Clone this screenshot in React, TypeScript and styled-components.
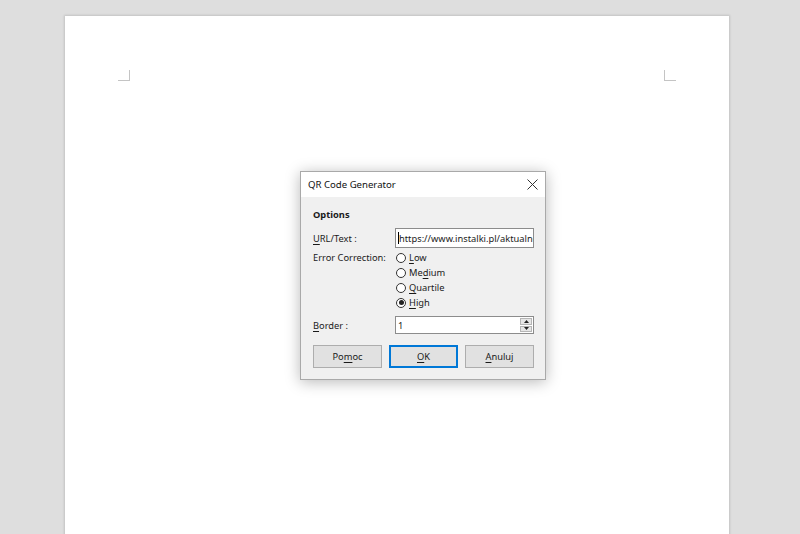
import { FC, ReactNode } from 'react';
import styled, { createGlobalStyle } from 'styled-components';

const GlobalStyle = createGlobalStyle`
  html, body {
    margin: 0;
    padding: 0;
    height: 100%;
    overflow: hidden;
    background: #dedede;
    font-family: "Noto Sans", "Open Sans", sans-serif;
  }
  #root {
    height: 100%;
  }
`;

const Workspace = styled.div`
  height: 534px;
  padding-top: 16px;
  box-sizing: border-box;
  overflow: hidden;
`;

const Sheet = styled.div`
  position: relative;
  margin-left: 65px;
  width: 664px;
  height: 560px;
  background: #ffffff;
  box-shadow: 0 0 2px 1px rgba(0, 0, 0, 0.12);
  padding: 54px 53px 0;
  box-sizing: border-box;
`;

const Marks = styled.div`
  display: flex;
  justify-content: space-between;
`;

const Mark = styled.div<{ $side: 'left' | 'right' }>`
  width: 11px;
  height: 10px;
  border-bottom: 1px solid #c4c4c4;
  ${(p) => (p.$side === 'left' ? 'border-right: 1px solid #c4c4c4;' : 'border-left: 1px solid #c4c4c4;')}
`;

const Dialog = styled.div`
  position: absolute;
  left: 235px;
  top: 155px;
  width: 244px;
  border: 1px solid #a9a9a9;
  box-shadow: 0 2px 14px rgba(0, 0, 0, 0.28);
  background: #f0f0f0;
  color: #1a1a1a;
  font-size: 9.3px;
`;

const TitleBar = styled.div`
  height: 25px;
  background: #ffffff;
  display: flex;
  align-items: center;
  justify-content: space-between;
  padding: 0 7px 1px 7px;
  box-sizing: border-box;
`;

const Title = styled.span`
  font-size: 9.6px;
  color: #111;
`;

const CloseButton = styled.button`
  border: none;
  background: none;
  padding: 0;
  width: 12px;
  height: 12px;
  display: flex;
  align-items: center;
  justify-content: center;
`;

const Body = styled.div`
  padding: 9px 11px 11px 12px;
  display: flex;
  flex-direction: column;
`;

const Heading = styled.div`
  font-weight: 700;
  line-height: 18px;
  height: 18px;
  margin-bottom: 4px;
`;

const FormRow = styled.div<{ $align?: string; $gap?: number }>`
  display: grid;
  grid-template-columns: 82px 1fr;
  align-items: ${(p) => p.$align ?? 'center'};
  margin-top: ${(p) => p.$gap ?? 0}px;
`;

const Label = styled.span<{ $top?: number }>`
  white-space: nowrap;
  padding-top: ${(p) => p.$top ?? 0}px;
`;

const TextInput = styled.div<{ $h: number }>`
  height: ${(p) => p.$h}px;
  border: 1px solid #8c8c8c;
  background: #fff;
  box-sizing: border-box;
  display: flex;
  align-items: center;
  padding-left: 2px;
  overflow: hidden;
  white-space: nowrap;
`;

const Caret = styled.span`
  display: inline-block;
  flex: none;
  width: 1px;
  height: 12px;
  background: #000;
`;

const RadioGroup = styled.div`
  display: flex;
  flex-direction: column;
  margin-top: 2px;
`;

const RadioRow = styled.div`
  display: flex;
  align-items: center;
  height: 15px;
  gap: 3px;
  padding-left: 1px;
`;

const RadioCircle = styled.span<{ $checked?: boolean }>`
  width: 10px;
  height: 10px;
  border-radius: 50%;
  border: 1px solid #333;
  box-sizing: border-box;
  background: #fff;
  display: flex;
  align-items: center;
  justify-content: center;
  &::after {
    content: '';
    width: 5px;
    height: 5px;
    border-radius: 50%;
    background: ${(p) => (p.$checked ? '#222' : 'transparent')};
  }
`;

const Spin = styled.div`
  margin-left: auto;
  width: 12px;
  height: 14px;
  margin-right: 1px;
  display: flex;
  flex-direction: column;
  gap: 1px;
`;

const SpinPart = styled.div`
  flex: 1;
  background: #e6e6e6;
  border: 1px solid #b5b5b5;
  box-sizing: border-box;
  display: flex;
  align-items: center;
  justify-content: center;
`;

const Buttons = styled.div`
  display: grid;
  grid-template-columns: repeat(3, 69px);
  column-gap: 7px;
  margin-top: 11px;
`;

const Button = styled.button<{ $default?: boolean }>`
  height: 23px;
  font-family: inherit;
  font-size: 9.3px;
  color: #1a1a1a;
  background: #e1e1e1;
  border: 1px solid ${(p) => (p.$default ? '#0078d7' : '#adadad')};
  box-shadow: ${(p) => (p.$default ? 'inset 0 0 0 1px #0078d7' : 'none')};
  padding: 0;
`;

const Key = styled.u`
  text-decoration-thickness: 1px;
  text-underline-offset: 2px;
`;

const Arrow: FC<{ up?: boolean }> = ({ up }) => (
  <svg width="5" height="3" viewBox="0 0 5 3">
    <path d={up ? 'M0 3 L2.5 0 L5 3 Z' : 'M0 0 L2.5 3 L5 0 Z'} fill="#222" />
  </svg>
);

const Radio: FC<{ checked?: boolean; children: ReactNode }> = ({ checked, children }) => (
  <RadioRow>
    <RadioCircle $checked={checked} />
    <span>{children}</span>
  </RadioRow>
);

export default function App() {
  return (
    <>
      <GlobalStyle />
      <Workspace>
        <Sheet>
          <Marks>
            <Mark $side="left" />
            <Mark $side="right" />
          </Marks>
          <Dialog>
            <TitleBar>
              <Title>QR Code Generator</Title>
              <CloseButton>
                <svg width="11" height="11" viewBox="0 0 11 11">
                  <path d="M0.5 0.5 L10.5 10.5 M10.5 0.5 L0.5 10.5" stroke="#333" strokeWidth="1" />
                </svg>
              </CloseButton>
            </TitleBar>
            <Body>
              <Heading>Options</Heading>
              <FormRow>
                <Label><Key>U</Key>RL/Text :</Label>
                <TextInput $h={20}>
                  <Caret />https://www.instalki.pl/aktualności
                </TextInput>
              </FormRow>
              <FormRow $align="start">
                <Label $top={3}>Error Correction:</Label>
                <RadioGroup>
                  <Radio><Key>L</Key>ow</Radio>
                  <Radio>Me<Key>d</Key>ium</Radio>
                  <Radio><Key>Q</Key>uartile</Radio>
                  <Radio checked><Key>H</Key>igh</Radio>
                </RadioGroup>
              </FormRow>
              <FormRow $gap={6}>
                <Label><Key>B</Key>order :</Label>
                <TextInput $h={18}>
                  <span>1</span>
                  <Spin>
                    <SpinPart><Arrow up /></SpinPart>
                    <SpinPart><Arrow /></SpinPart>
                  </Spin>
                </TextInput>
              </FormRow>
              <Buttons>
                <Button>Po<Key>m</Key>oc</Button>
                <Button $default><Key>O</Key>K</Button>
                <Button><Key>A</Key>nuluj</Button>
              </Buttons>
            </Body>
          </Dialog>
        </Sheet>
      </Workspace>
    </>
  );
}
